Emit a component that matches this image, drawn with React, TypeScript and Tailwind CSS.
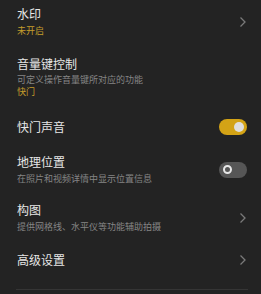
const font = { fontFamily: '"Noto Sans CJK SC", "Noto Sans", sans-serif' }

function Chevron() {
  return (
    <svg width="8" height="12" viewBox="0 0 8 12" className="shrink-0">
      <polyline points="1.5,1.5 6,6 1.5,10.5" fill="none" stroke="#7a7a7a" strokeWidth="1.3" />
    </svg>
  )
}

function Toggle({ on }: { on: boolean }) {
  return on ? (
    <div className="w-[28px] h-[16px] rounded-full bg-[#d3a316] flex items-center justify-end pr-[3px] shrink-0">
      <div className="w-[10px] h-[10px] rounded-full bg-[#dedede]" />
    </div>
  ) : (
    <div className="w-[28px] h-[16px] rounded-full bg-[#565656] flex items-center pl-[4px] shrink-0">
      <div className="w-[9px] h-[9px] rounded-full border-2 border-[#e8e8e8]" />
    </div>
  )
}

export default function App() {
  return (
    <div className="w-[261px] h-[294px] bg-[#232323] overflow-hidden pl-[17px] pr-[14px]" style={font}>
      {/* 水印 */}
      <div className="flex items-center justify-between pt-[6px] pb-[9px]">
        <div>
          <div className="text-[12px] leading-[16px] text-[#e6e6e6]">水印</div>
          <div className="mt-[3px] text-[9px] leading-[12px] text-[#c39d2c]">未开启</div>
        </div>
        <Chevron />
      </div>
      {/* 音量键控制 */}
      <div className="pt-[10px] pb-[10px]">
        <div className="text-[12px] leading-[16px] text-[#e6e6e6]">音量键控制</div>
        <div className="mt-[2px] text-[9px] leading-[12px] text-[#858585]">可定义操作音量键所对应的功能</div>
        <div className="text-[9px] leading-[12px] text-[#c39d2c]">快门</div>
      </div>
      {/* 快门声音 */}
      <div className="flex items-center justify-between pt-[11px] pb-[9px]">
        <div className="text-[12px] leading-[16px] text-[#e6e6e6]">快门声音</div>
        <Toggle on />
      </div>
      {/* 地理位置 */}
      <div className="flex items-center justify-between pt-[10px] pb-[8px]">
        <div>
          <div className="text-[12px] leading-[16px] text-[#e6e6e6]">地理位置</div>
          <div className="mt-[3px] text-[9px] leading-[12px] text-[#858585]">在照片和视频详情中显示位置信息</div>
        </div>
        <Toggle on={false} />
      </div>
      {/* 构图 */}
      <div className="flex items-center justify-between pt-[9px] pb-[9px]">
        <div>
          <div className="text-[12px] leading-[16px] text-[#e6e6e6]">构图</div>
          <div className="mt-[3px] text-[9px] leading-[12px] text-[#858585]">提供网格线、水平仪等功能辅助拍摄</div>
        </div>
        <Chevron />
      </div>
      {/* 高级设置 */}
      <div className="flex items-center justify-between pt-[10px] pb-[21px]">
        <div className="text-[12px] leading-[16px] text-[#e6e6e6]">高级设置</div>
        <Chevron />
      </div>
      <div className="h-px bg-[#353535] mr-[-1px] ml-[-1px]" />
    </div>
  )
}
